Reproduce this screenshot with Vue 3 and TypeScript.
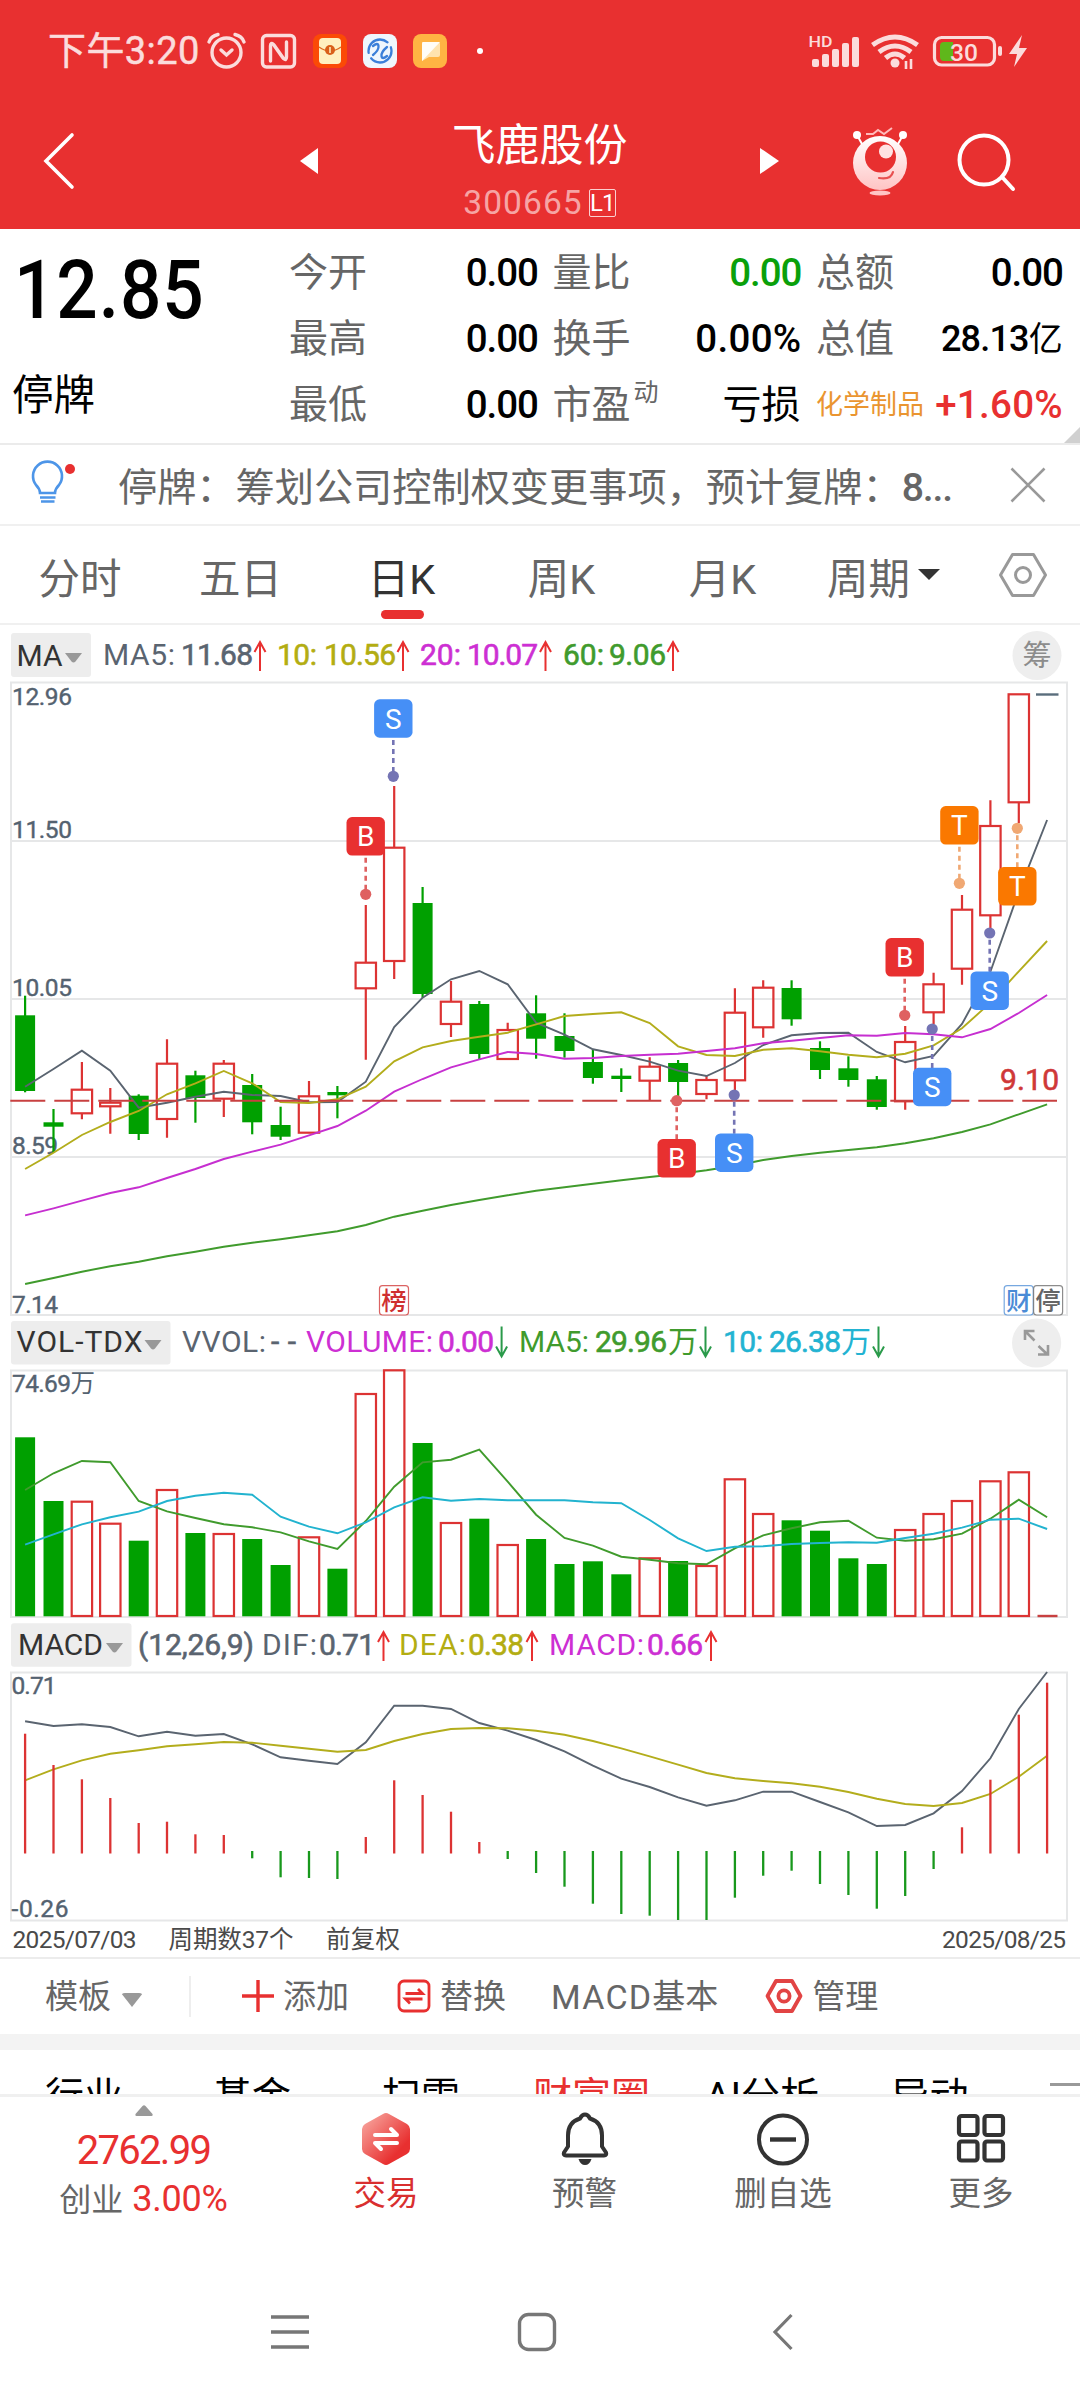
<script setup lang="ts">
type Series = number[]

const STEP = 28.39
const cx = (i: number): number => +(25.1 + i * STEP).toFixed(1)
const line = (ys: Series): string => ys.map((y, i) => `${cx(i)},${y}`).join(' ')

/* direction, high, body top, body bottom, low */
const candles: [string, number, number, number, number][] = [
  ['d', 995.7, 1015.3, 1091, 1092.3], ['d', 1109, 1122.3, 1126.7, 1152.7], ['u', 1062, 1089.7, 1113.3, 1119.3],
  ['u', 1088, 1102.7, 1106.3, 1133.7], ['d', 1094.3, 1095.7, 1134, 1140], ['u', 1039.3, 1063.7, 1119, 1137.7],
  ['d', 1070.7, 1075.3, 1098, 1122.7], ['u', 1060, 1063.7, 1098.7, 1117], ['d', 1074, 1085, 1122.3, 1134.3],
  ['d', 1106.7, 1125, 1136.7, 1140], ['u', 1081, 1096.3, 1132.7, 1133], ['d', 1086, 1092, 1095.3, 1118.3],
  ['u', 905, 962.7, 988.3, 1059.7], ['u', 786, 847.7, 961, 979], ['d', 887, 903, 994, 997.7],
  ['u', 981, 1001.7, 1024, 1037], ['d', 1001, 1004, 1054, 1059.3], ['u', 1022.7, 1030, 1059, 1059.3],
  ['d', 995.3, 1013.3, 1038.7, 1058.7], ['d', 1013.3, 1036, 1051, 1057.7], ['d', 1049.3, 1062, 1078, 1083.7],
  ['d', 1068.3, 1075.7, 1079, 1092], ['u', 1057.3, 1066.7, 1080.7, 1100.3], ['d', 1060, 1063, 1082, 1096],
  ['u', 1076, 1080, 1094, 1099.3], ['u', 988.3, 1012.7, 1080.3, 1090], ['u', 980.3, 987.7, 1027.3, 1037.7],
  ['d', 980.3, 988, 1019.3, 1025.7], ['d', 1041.3, 1048, 1070, 1079], ['d', 1056.3, 1068.3, 1080, 1086.7],
  ['d', 1076, 1079.3, 1107, 1109.7], ['u', 1026, 1042, 1101.3, 1109.7], ['u', 972.7, 984.3, 1012.3, 1024],
  ['u', 895, 909.7, 968.7, 984.7], ['u', 800.3, 826, 915.3, 928.3], ['u', 694.3, 694.3, 802.3, 823.3]
]

const ma5: Series = [1086.7, 1069, 1050.7, 1070.7, 1107.7, 1102.7, 1096.7, 1091.7, 1095, 1096, 1102.3, 1102, 1081.7, 1027, 997.7, 979.3, 971, 984.3, 1022.7, 1034.7, 1049.3, 1055, 1061.7, 1070.7, 1076, 1063, 1045, 1035.3, 1033, 1032.7, 1052, 1062.3, 1056, 1024, 971.7, 891.7, 820]
const ma10: Series = [1169, 1152.7, 1135, 1122, 1111, 1094.3, 1083.3, 1071, 1083.3, 1102, 1103, 1099.3, 1086.7, 1061.3, 1047.3, 1041, 1036.7, 1032.7, 1024.3, 1016, 1014, 1012.3, 1023, 1046.3, 1055, 1056, 1049.7, 1048.3, 1051.3, 1054.7, 1057.3, 1053.7, 1045.3, 1028.3, 1002.7, 971.3, 941]
const ma20: Series = [1215.3, 1208.3, 1200.7, 1193, 1187.3, 1178, 1169, 1159, 1151.7, 1144.7, 1135.3, 1126, 1110.7, 1091.7, 1079, 1067.3, 1059.3, 1052, 1054, 1058.7, 1058, 1056, 1054.7, 1053.7, 1051, 1048.3, 1043.3, 1040.7, 1038, 1035.3, 1035.7, 1033, 1034.3, 1037.3, 1029, 1013, 995]
const ma60: Series = [1284, 1278, 1271.7, 1266.3, 1261.7, 1256.3, 1251.7, 1246.7, 1242.7, 1239.3, 1235.3, 1231.3, 1225, 1216.7, 1210.7, 1205, 1200, 1195.3, 1190.7, 1187.3, 1183.7, 1180.3, 1177, 1174, 1170.3, 1165.7, 1160, 1156, 1152.7, 1150, 1147.3, 1143.3, 1138.3, 1132, 1124.3, 1114.3, 1104.3]

const volTop: Series = [1437.3, 1501, 1501.7, 1523.7, 1540.7, 1490, 1533, 1534, 1539, 1565, 1537.3, 1568.7, 1394, 1370.3, 1443, 1523, 1518.7, 1545, 1539, 1564, 1561.3, 1574.3, 1558.3, 1561, 1566, 1479.3, 1514, 1520.3, 1530.7, 1558.3, 1564, 1530, 1514, 1501, 1481.3, 1472.3]
const volMa5: Series = [1490, 1473.3, 1461, 1462.3, 1501, 1511.3, 1518, 1524.3, 1527.3, 1532.3, 1541.3, 1549, 1521, 1486.7, 1462.3, 1459.7, 1449.7, 1481.7, 1514.7, 1538, 1545.7, 1556.7, 1559.7, 1563.3, 1564.3, 1548.3, 1535.3, 1528.3, 1522.3, 1520.7, 1537.7, 1540.7, 1539.3, 1533.7, 1518.7, 1499.7, 1517.3]
const volMa10: Series = [1544.7, 1534.3, 1524.3, 1517.3, 1511.7, 1501, 1495.7, 1492.7, 1494.7, 1516.7, 1526.7, 1533.3, 1522.3, 1507.3, 1497.3, 1500.7, 1499, 1500.3, 1500.3, 1500.3, 1502.3, 1503.3, 1520, 1538.3, 1551, 1546.7, 1546.3, 1544, 1543, 1542.3, 1542.7, 1538, 1533.7, 1527.7, 1519.7, 1518.7, 1529]

const hist: Series = [1733.7, 1765, 1779.3, 1798, 1823, 1821.7, 1834.3, 1835, 1858.3, 1877.3, 1878, 1879, 1837, 1780.3, 1795, 1811.7, 1842, 1859, 1873, 1886.7, 1903.7, 1914, 1915.7, 1920, 1920, 1897.7, 1875.7, 1870.7, 1884, 1895, 1908.7, 1896, 1869, 1827.3, 1779.7, 1714.7, 1682.7]
const dif: Series = [1721.3, 1726, 1724.3, 1727, 1736.3, 1731.7, 1735.7, 1734, 1744.3, 1757.3, 1760.7, 1764, 1742.3, 1705.7, 1705.7, 1709, 1723, 1730.7, 1740, 1751.3, 1765.7, 1778.7, 1787, 1797.3, 1805.7, 1800.3, 1791.7, 1791.7, 1802, 1812.3, 1826, 1825, 1813.3, 1791, 1758.3, 1709, 1672]
const dea: Series = [1780.3, 1769.3, 1760.3, 1753.7, 1750.3, 1746.3, 1744.3, 1742, 1742.7, 1745.7, 1748.7, 1751.7, 1750, 1741, 1734, 1729, 1728, 1728.3, 1730.7, 1734.7, 1741, 1748.3, 1756.3, 1764.7, 1773, 1778.3, 1781, 1783.3, 1786.7, 1792, 1798.7, 1804, 1806, 1803, 1794, 1776.7, 1755.7]

interface Badge { t: string; x: number; y: number; dot: number }
const badges: Badge[] = [
  { t: 'S', x: 393.3, y: 718.5, dot: 776.3 },
  { t: 'B', x: 365.7, y: 836.3, dot: 894.3 },
  { t: 'T', x: 959.4, y: 825.3, dot: 883.3 },
  { t: 'T', x: 1017.3, y: 886.3, dot: 828.3 },
  { t: 'B', x: 904.7, y: 957.3, dot: 1015.3 },
  { t: 'S', x: 989.7, y: 990.7, dot: 933 },
  { t: 'S', x: 932.2, y: 1087, dot: 1029 },
  { t: 'B', x: 676.7, y: 1158.3, dot: 1100.7 },
  { t: 'S', x: 734.2, y: 1152.7, dot: 1095 }
]
const fill: Record<string, string> = { S: '#468ff6', B: '#e83030', T: '#fa7800' }
const soft: Record<string, string> = { S: '#7474b4', B: '#df6161', T: '#f0a873' }

interface Legend { t: string; x: number; w: number; c: string; m?: boolean }
const GREY = '#5a6470'
const maLegend: Legend[] = [
  { t: 'MA5:', x: 103, w: 72, c: GREY }, { t: '11.68', x: 181, w: 72, c: GREY, m: true },
  { t: '10:', x: 277, w: 40, c: '#b3ad12', m: true }, { t: '10.56', x: 324, w: 72, c: '#b3ad12', m: true },
  { t: '20:', x: 420, w: 41, c: '#cd2fd3', m: true }, { t: '10.07', x: 467, w: 71, c: '#cd2fd3', m: true },
  { t: '60:', x: 563, w: 41, c: '#409b2d', m: true }, { t: '9.06', x: 609, w: 57, c: '#409b2d', m: true }
]
const volLegend: Legend[] = [
  { t: 'VVOL:', x: 182, w: 84, c: GREY }, { t: '--', x: 271, w: 25, c: GREY, m: true },
  { t: 'VOLUME:', x: 306, w: 127, c: '#cd2fd3' }, { t: '0.00', x: 438, w: 56, c: '#cd2fd3', m: true },
  { t: 'MA5:', x: 519, w: 70, c: '#409b2d' }, { t: '29.96', x: 595, w: 72, c: '#409b2d', m: true }, { t: '万', x: 668, w: 29, c: '#409b2d' },
  { t: '10:', x: 723, w: 40, c: '#22b3d2', m: true }, { t: '26.38', x: 769, w: 72, c: '#22b3d2', m: true }, { t: '万', x: 841, w: 29, c: '#22b3d2' }
]
const macdLegend: Legend[] = [
  { t: '(12,26,9)', x: 138, w: 116, c: GREY, m: true },
  { t: 'DIF:', x: 262, w: 55, c: GREY }, { t: '0.71', x: 319, w: 56, c: GREY, m: true },
  { t: 'DEA:', x: 399, w: 67, c: '#b3ad12' }, { t: '0.38', x: 468, w: 56, c: '#b3ad12', m: true },
  { t: 'MACD:', x: 549, w: 95, c: '#cd2fd3' }, { t: '0.66', x: 647, w: 56, c: '#cd2fd3', m: true }
]
const priceAxis = [
  { t: '12.96', y: 704.7, w: 60 }, { t: '11.50', y: 837.7, w: 60 }, { t: '10.05', y: 995.7, w: 60 },
  { t: '8.59', y: 1153.7, w: 46 }, { t: '7.14', y: 1312.7, w: 46 }
]
const tags = [
  { t: '榜', x: 379.5, c: '#cf2f2f' }, { t: '财', x: 1004.2, c: '#4a8bd6' }, { t: '停', x: 1033.6, c: '#666' }
]
const up = (x: number, y: number): string => `M${x} ${y + 30}V${y + 1}M${x - 5.5} ${y + 11}L${x} ${y + 1}L${x + 5.5} ${y + 11}`
const down = (x: number, y: number): string => `M${x} ${y}V${y + 30}M${x - 5.5} ${y + 20}L${x} ${y + 30}L${x + 5.5} ${y + 20}`

const tabs = [
  { t: '分时', w: 160 }, { t: '五日', w: 161 }, { t: '日K', w: 161, on: true }, { t: '周K', w: 159 }, { t: '月K', w: 163 }
]
const infoTabs = [
  { t: '行业', w: 168 }, { t: '基金', w: 168 }, { t: '扫雷', w: 170 }, { t: '财富圈', w: 171, on: true }, { t: 'AI分析', w: 170 }, { t: '异动', w: 165 }
]
</script>

<template>
  <div class="app">
    <header class="top">
      <div class="status">
        <span class="clock">下午3:20</span>
        <svg class="st-left" width="290" height="50" viewBox="200 26 290 50">
          <g fill="none" stroke="#fbdcdc" stroke-width="3.4" stroke-linecap="round">
            <circle cx="226.5" cy="52.5" r="14.5" />
            <path d="M209 42Q211 36 218 34.500M244 42Q242 36 235 34.500" />
            <path d="M221 50l5.500 5 5.500-5" />
            <rect x="262.500" y="35.500" width="32" height="31.500" rx="4" />
            <path d="M270.500 61V46q0-4 3-1.500l9.500 13.500M286.500 42V57q0 4-3 1.500L274 45" />
          </g>
          <rect x="313" y="34" width="34" height="34" rx="8" fill="#fb4a06" />
          <rect x="319" y="38" width="22" height="26" rx="4" fill="#fff0c0" />
          <path d="M319 47q11 8 22 0" fill="none" stroke="#dd6a20" stroke-width="1.500" />
          <circle cx="330" cy="50" r="5" fill="#d9601a" /><path d="M330 47v6" stroke="#fff0c0" stroke-width="1.500" />
          <rect x="363" y="34" width="34" height="34" rx="8" fill="#eff6fd" />
          <g fill="none" stroke="#3b7fd9" stroke-width="2.300" stroke-linecap="round">
            <circle cx="380" cy="51" r="11.500" stroke-dasharray="28 6" />
            <path d="M373 46q5-4 5.500 0t-5.500 9M387 56q-5 4-5.500 0t5.500-9" />
          </g>
          <rect x="413" y="34" width="34" height="34" rx="8" fill="#ffb443" />
          <path d="M423 42h15q2 0 2 2v11q0 2-2 2h-9l-7 4v-17q0-2 1-2z" fill="#ffe3ae" />
          <path d="M423 42h17l-18 19v-17q0-2 1-2z" fill="#fffdf7" />
          <circle cx="480" cy="51" r="3" fill="#fff" />
        </svg>
        <svg class="st-right" width="230" height="50" viewBox="800 26 230 50">
          <text x="808.500" y="47" class="hd" textLength="24" lengthAdjust="spacingAndGlyphs">HD</text>
          <g fill="#fbdcdc">
            <rect x="812" y="59" width="7" height="8" rx="2" /><rect x="822" y="54" width="7" height="13" rx="2" />
            <rect x="832" y="49" width="7" height="18" rx="2" /><rect x="842" y="43" width="7" height="24" rx="2" />
            <rect x="852" y="37" width="7" height="30" rx="2" />
            <circle cx="895" cy="63" r="4.500" /><path d="M1022 35l-13 19h8l-3 13 13-19h-8z" />
            <rect x="998" y="46" width="4" height="10" rx="2" />
          </g>
          <g fill="none" stroke="#fbdcdc" stroke-width="5">
            <path d="M872.500 45q22.500-16 45 0M879 52q16-12 32 0M885.500 58q9.500-8 19 0" />
            <path d="M906 61v8M911 59v10" stroke-width="2.600" />
            <rect x="934.500" y="37.500" width="60" height="27.500" rx="7" stroke-width="3.200" />
          </g>
          <path d="M944 42h9v19h-9q-4 0-4-4V46q0-4 4-4z" fill="#5fb71b" />
          <text x="950" y="60.500" class="bat" textLength="28" lengthAdjust="spacingAndGlyphs">30</text>
        </svg>
      </div>
      <div class="bar">
        <svg class="back" width="34" height="60" viewBox="0 0 34 60"><path d="M30 4L4 30L30 56" fill="none" stroke="#fff" stroke-width="3.600" stroke-linecap="round" /></svg>
        <svg class="prev" width="20" height="26" viewBox="0 0 20 26"><path d="M19 0v26L1 13z" fill="#fff" /></svg>
        <div class="title">
          <h1>飞鹿股份</h1>
          <p>300665<i>L1</i></p>
        </div>
        <svg class="next" width="20" height="26" viewBox="0 0 20 26"><path d="M0 0v26l19-13z" fill="#fff" /></svg>
        <svg class="robot" width="58" height="70" viewBox="0 0 58 70">
          <defs><linearGradient id="rb" x1="0" y1="0" x2="0" y2="1"><stop offset="0" stop-color="#fff" /><stop offset="1" stop-color="#ffc4c4" /></linearGradient></defs>
          <circle cx="29" cy="36" r="27" fill="url(#rb)" />
          <path d="M11 17L6 8M47 17l5-9" stroke="#fff" stroke-width="2" />
          <circle cx="6" cy="8" r="4" fill="#fff" /><circle cx="52" cy="8" r="4" fill="#fff" />
          <path d="M15 7h7l5-4 6 4 8-6" fill="none" stroke="#fbb" stroke-width="2" />
          <circle cx="29.500" cy="30" r="15.500" fill="#e83030" /><circle cx="35" cy="24.500" r="7" fill="#ffe3e3" />
          <path d="M28 51q12 2 14-6" fill="none" stroke="#e85050" stroke-width="2.200" stroke-linecap="round" />
          <ellipse cx="29" cy="66" rx="10.500" ry="2.600" fill="#ffc4c4" />
        </svg>
        <svg class="search" width="60" height="60" viewBox="0 0 60 60"><g fill="none" stroke="#fff" stroke-width="4" stroke-linecap="round"><circle cx="27" cy="27" r="24.500" /><path d="M45 44l11 12" /></g></svg>
      </div>
    </header>

    <section class="quote">
      <div class="last"><b>12.85</b><span>停牌</span></div>
      <dl>
        <div><dt>今开</dt><dd>0.00</dd></div>
        <div><dt>量比</dt><dd class="green">0.00</dd></div>
        <div><dt>总额</dt><dd>0.00</dd></div>
        <div><dt>最高</dt><dd>0.00</dd></div>
        <div><dt>换手</dt><dd class="wide">0.00%</dd></div>
        <div><dt>总值</dt><dd class="tight">28.13<small>亿</small></dd></div>
        <div><dt>最低</dt><dd>0.00</dd></div>
        <div><dt>市盈<sup>动</sup></dt><dd class="cn">亏损</dd></div>
        <div><dt class="sector">化学制品</dt><dd class="red wide">+1.60%</dd></div>
      </dl>
      <i class="corner"></i>
    </section>

    <section class="notice">
      <svg class="bulb" width="48" height="46" viewBox="30 460 48 46">
        <g fill="none" stroke="#4d95e8" stroke-width="2.600"><path d="M40 493q0-4-4-8a14.500 14.500 0 1 1 23 0q-4 4-4 8z" /><path d="M40 497.500h15.500M41 501.500h13.500" /></g>
        <circle cx="70" cy="469" r="5" fill="#e83030" />
      </svg>
      <p>停牌：筹划公司控制权变更事项，预计复牌：<span>8...</span></p>
      <svg class="x" width="36" height="36" viewBox="0 0 36 36"><path d="M1.500 1.500l33 33M34.500 1.500l-33 33" stroke="#999" stroke-width="2.600" /></svg>
    </section>

    <nav class="tabs">
      <span v-for="t in tabs" :key="t.t" :class="{ on: t.on }" :style="{ width: t.w + 'px' }">{{ t.t }}</span>
      <span class="period">周期<i></i></span>
      <svg class="hex" width="50" height="48" viewBox="0 0 50 48"><g fill="none" stroke="#999" stroke-width="3"><path d="M14.500 3.500h21L47.500 24 35.500 44.500h-21L2.500 24z" stroke-linejoin="round" /><circle cx="25" cy="24" r="7.500" /></g></svg>
    </nav>

    <svg class="panel" width="1080" height="693" viewBox="0 625 1080 693">
      <rect x="11" y="633" width="80" height="44" rx="3" fill="#ededed" />
      <text x="16.500" y="665.500" class="lg" fill="#333" textLength="46" lengthAdjust="spacingAndGlyphs">MA</text>
      <path d="M65 653h17l-6.500 8.500q-2 2-4 0z" fill="#999" />
      <text v-for="l in maLegend" :key="l.x" :x="l.x" y="665" class="lg" :class="{ m: l.m }" :fill="l.c" :stroke="l.m ? l.c : 'none'" :textLength="l.w">{{ l.t }}</text>
      <path v-for="x in [260, 403, 545.5, 673]" :key="x" :d="up(x, 641)" class="arrow up" />
      <circle cx="1037" cy="655.500" r="24.500" fill="#eee" />
      <text x="1037" y="666" text-anchor="middle" class="cjk" font-size="29" fill="#8c8c8c">筹</text>

      <g fill="none" stroke="#e6e7e8" stroke-width="2">
        <rect x="11" y="682.500" width="1056" height="632.500" /><path d="M11 841H1067M11 999H1067M11 1157H1067" />
      </g>
      <text v-for="a in priceAxis" :key="a.t" x="12" :y="a.y" class="ax" :textLength="a.w">{{ a.t }}</text>
      <g v-for="(k, i) in candles" :key="i">
        <g v-if="k[0] === 'd'" fill="#00a000"><rect :x="cx(i) - 1.1" :y="k[1]" width="2.200" :height="k[4] - k[1]" /><rect :x="cx(i) - 10" :y="k[2]" width="20" :height="k[3] - k[2]" /></g>
        <g v-else stroke="#dc3333" stroke-width="2.200" fill="none"><path :d="`M${cx(i)} ${k[1]}V${k[2]}M${cx(i)} ${k[3]}V${k[4]}`" /><rect :x="cx(i) - 10.2" :y="k[2]" width="20.400" :height="k[3] - k[2]" /></g>
      </g>
      <path d="M1036 694.500h22.500" stroke="#5a6d7c" stroke-width="2.400" />
      <g fill="none" stroke-width="1.900">
        <polyline :points="line(ma5)" stroke="#5a6470" /><polyline :points="line(ma10)" stroke="#b3ad1c" />
        <polyline :points="line(ma20)" stroke="#c62fd0" /><polyline :points="line(ma60)" stroke="#409b2d" />
      </g>
      <path d="M10.300 1100.700H1057" stroke="#c84040" stroke-width="2" stroke-dasharray="35 9" />
      <text x="1000" y="1090" class="lg m" fill="#cf3838" stroke="#cf3838" textLength="59">9.10</text>
      <g v-for="(b, i) in badges" :key="'b' + i">
        <line :x1="b.x" :x2="b.x" :y1="b.dot > b.y ? b.y + 21.5 : b.y - 19" :y2="b.dot" :stroke="soft[b.t]" stroke-width="2.600" stroke-dasharray="5 4" />
        <circle :cx="b.x" :cy="b.dot" r="5.600" :fill="soft[b.t]" />
        <rect :x="b.x - 19.2" :y="b.y - 19.2" width="38.400" height="38.400" rx="5.500" :fill="fill[b.t]" />
        <text :x="b.x" :y="b.y + 10" text-anchor="middle" class="bd">{{ b.t }}</text>
      </g>
      <g v-for="t in tags" :key="t.t">
        <rect :x="t.x" y="1285.700" width="29" height="29.300" rx="3" fill="#fff" :stroke="t.c" stroke-width="1.200" stroke-opacity=".75" />
        <text :x="t.x + 14.5" y="1309.500" text-anchor="middle" class="cjk" font-size="25.500" font-weight="500" :fill="t.c">{{ t.t }}</text>
      </g>
    </svg>

    <svg class="panel" width="1080" height="302" viewBox="0 1318 1080 302">
      <rect x="11" y="1321" width="159.500" height="43.500" rx="3" fill="#ededed" />
      <text x="16.500" y="1352" class="lg" fill="#333" textLength="126">VOL-TDX</text>
      <path d="M144.500 1340h17l-6.500 8.500q-2 2-4 0z" fill="#999" />
      <text v-for="l in volLegend" :key="l.x" :x="l.x" y="1352" :class="[l.t === '万' ? 'wan' : 'lg', { m: l.m }]" :fill="l.c" :stroke="l.m ? l.c : 'none'" :textLength="l.w">{{ l.t }}</text>
      <path v-for="x in [501.6, 705.5, 878.5]" :key="x" :d="down(x, 1326.5)" class="arrow down" />
      <circle cx="1036.600" cy="1343" r="24.600" fill="#eee" />
      <path d="M1034.500 1340.500l-9-9M1025 1340v-9h9.500M1038.500 1346l9 8.500M1048 1345v9.500h-10" fill="none" stroke="#999" stroke-width="2.600" />
      <rect x="11" y="1370.500" width="1056" height="246.500" fill="none" stroke="#e6e7e8" stroke-width="2" />
      <text x="12" y="1391.700" class="ax" textLength="59">74.69</text>
      <text x="70.500" y="1391.700" class="cjk" font-size="24.500" fill="#546270">万</text>
      <template v-for="(y, i) in volTop" :key="i">
        <rect v-if="candles[i][0] === 'd'" :x="cx(i) - 10" :y="y" width="20" :height="1616.3 - y" fill="#00a000" />
        <rect v-else :x="cx(i) - 10.2" :y="y" width="20.400" :height="1616 - y" fill="none" stroke="#dc3333" stroke-width="2.200" />
      </template>
      <path d="M1037.500 1616h20" stroke="#c84040" stroke-width="2.400" />
      <g fill="none" stroke-width="1.900"><polyline :points="line(volMa5)" stroke="#409b2d" /><polyline :points="line(volMa10)" stroke="#22b3cf" /></g>
    </svg>

    <svg class="panel" width="1080" height="337" viewBox="0 1620 1080 337">
      <rect x="11" y="1623.300" width="120.500" height="43.500" rx="3" fill="#ededed" />
      <text x="18" y="1655" class="lg" fill="#333" textLength="85">MACD</text>
      <path d="M106 1643h17l-6.500 8.500q-2 2-4 0z" fill="#999" />
      <text v-for="l in macdLegend" :key="l.x" :x="l.x" y="1655" class="lg" :class="{ m: l.m }" :fill="l.c" :stroke="l.m ? l.c : 'none'" :textLength="l.w">{{ l.t }}</text>
      <path v-for="x in [383.5, 532, 711]" :key="x" :d="up(x, 1631)" class="arrow up" />
      <rect x="11" y="1672.500" width="1056" height="248" fill="none" stroke="#e6e7e8" stroke-width="2" />
      <text x="11.500" y="1694.300" class="ax" textLength="45">0.71</text>
      <text x="11.500" y="1917.300" class="ax" textLength="57">-0.26</text>
      <g fill="none" stroke-width="1.900"><polyline :points="line(dif)" stroke="#5a6470" /><polyline :points="line(dea)" stroke="#b3ad1c" /></g>
      <path v-for="(y, i) in hist" :key="i" :d="y < 1852 ? `M${cx(i)} 1853.500V${y}` : `M${cx(i)} 1851V${y}`" :stroke="y < 1852 ? '#dc3333' : '#18981c'" stroke-width="2.300" />
      <g class="date" fill="#4a4a4a">
        <text x="12.500" y="1947.700" textLength="124">2025/07/03</text>
        <text x="168.500" y="1948" textLength="125">周期数37个</text>
        <text x="326" y="1948" textLength="74">前复权</text>
        <text x="942" y="1947.700" textLength="124">2025/08/25</text>
      </g>
    </svg>

    <div class="tools">
      <span class="tpl">模板<i></i></span>
      <span class="add"><svg width="32" height="32" viewBox="0 0 32 32"><path d="M16 0v32M0 16h32" stroke="#e83030" stroke-width="3.400" /></svg>添加</span>
      <span class="rep"><svg width="34" height="34" viewBox="0 0 34 34"><g fill="none" stroke="#e83030" stroke-width="2.800"><rect x="2" y="2" width="30" height="30" rx="5" /><path d="M8.500 14.500h17l-4.500-4.500M25.500 20H8.500l4.500 4.500" /></g></svg>替换</span>
      <span class="base"><em>MACD</em>基本</span>
      <span class="mgr"><svg width="38" height="36" viewBox="0 0 38 36"><g fill="none" stroke="#e24444" stroke-width="3.800"><path d="M11 3h16l8.500 15L27 33H11L2.500 18z" stroke-linejoin="round" /><circle cx="19" cy="18" r="5.600" /></g></svg>管理</span>
    </div>

    <div class="info">
      <span v-for="t in infoTabs" :key="t.t" :class="{ on: t.on }" :style="{ width: t.w + 'px' }">{{ t.t }}</span>
      <i></i>
    </div>

    <footer class="dock">
      <div class="index">
        <svg width="18" height="11" viewBox="0 0 18 11"><path d="M7.500 1q1.500-1.500 3 0L17.500 9q.5 2-1 2h-15q-1.500 0-1-2z" fill="#999" /></svg>
        <b>2762.99</b>
        <p>创业<em>3.00%</em></p>
      </div>
      <div class="act hot" style="width: 198px">
        <svg width="54" height="54" viewBox="0 0 54 54">
          <defs><linearGradient id="hx" x1="0" y1="0" x2="1" y2="1"><stop offset="0" stop-color="#f9b0a8" /><stop offset=".75" stop-color="#e83030" /></linearGradient></defs>
          <path d="M27 1q1.500 0 3 1l18 10q3 2 3 5v20q0 3-3 5L30 52q-3 2-6 0L6 42q-3-2-3-5V17q0-3 3-5L24 2q1.500-1 3-1z" fill="url(#hx)" />
          <path d="M16 23h22l-6-6M38 31H16l6 6" fill="none" stroke="#fff" stroke-width="4" stroke-linejoin="round" stroke-linecap="round" />
        </svg><span>交易</span>
      </div>
      <div class="act" style="width: 199px">
        <svg width="54" height="54" viewBox="0 0 54 54"><path d="M27 2.500c2.500 0 4 2 5 4 8 2.500 12 9 12 17v11l4 6q1 3-2 3H8q-3 0-2-3l4-6v-11c0-8 4-14.500 12-17 1-2 2.500-4 5-4z" fill="none" stroke="#333" stroke-width="4" stroke-linejoin="round" /><path d="M20.500 47h13q-2 6-6.500 6t-6.500-6z" fill="#333" /></svg><span>预警</span>
      </div>
      <div class="act" style="width: 198px">
        <svg width="54" height="54" viewBox="0 0 54 54"><g fill="none" stroke="#333" stroke-width="4"><circle cx="27" cy="27.500" r="24" /><path d="M14 27.500h26" stroke-width="4.400" /></g></svg><span>删自选</span>
      </div>
      <div class="act" style="width: 198px">
        <svg width="54" height="54" viewBox="0 0 54 54"><g fill="none" stroke="#333" stroke-width="4.200"><rect x="5" y="4" width="18.500" height="19" rx="2.500" /><rect x="30.500" y="4" width="18.500" height="19" rx="2.500" /><rect x="5" y="29.500" width="18.500" height="19" rx="2.500" /><rect x="30.500" y="29.500" width="18.500" height="19" rx="2.500" /></g></svg><span>更多</span>
      </div>
    </footer>

    <div class="sysnav">
      <svg width="38" height="36" viewBox="0 0 38 36"><path d="M0 3h38M0 18h38M0 33h38" stroke="#777" stroke-width="3.400" /></svg>
      <svg width="40" height="40" viewBox="0 0 40 40"><rect x="2.500" y="2.500" width="35" height="35" rx="9" fill="none" stroke="#777" stroke-width="3.400" /></svg>
      <svg width="22" height="38" viewBox="0 0 22 38"><path d="M19.500 2L3 19l16.500 17" fill="none" stroke="#777" stroke-width="3.200" /></svg>
    </div>
  </div>
</template>

<style>
body { background: #fff; }
</style>

<style scoped>
.app { width: 1080px; height: 2400px; display: flex; flex-direction: column; overflow: hidden; background: #fff; color: #000; font-family: Roboto, "Noto Sans CJK SC", sans-serif; }
.app * { box-sizing: border-box; }
svg { flex: none; display: block; }
i, em { font-style: normal; }
h1, p, dl, dt, dd { margin: 0; font-weight: 400; }

.top { height: 229px; flex: none; background: #e83030; color: #fff; display: flex; flex-direction: column; }
.status { height: 100px; padding-left: 48px; display: flex; align-items: flex-start; color: #fbdcdc; }
.clock { width: 152px; font-size: 38px; line-height: 50px; margin-top: 26px; letter-spacing: .4px; white-space: nowrap; -webkit-text-stroke: .5px #fbdcdc; }
.st-left, .st-right { margin-top: 26px; }
.st-right { margin-left: 310px; }
.hd { font: 500 15px Roboto, sans-serif; fill: #fbdcdc; }
.bat { font: 500 24px Roboto, sans-serif; fill: #fbdcdc; }
.bar { height: 129px; display: flex; align-items: flex-start; }
.back { margin: 31px 0 0 42px; }
.prev { margin: 48px 0 0 223px; }
.title { width: 441px; text-align: center; margin-top: 17px; }
.title h1 { font-size: 44px; line-height: 58px; }
.title p { display: flex; justify-content: center; align-items: center; font-size: 33.500px; line-height: 36px; margin-top: 10px; letter-spacing: 1.100px; color: #f6a4a4; }
.title p i { width: 27px; height: 28px; margin-left: 6px; border: 1.500px solid #fbd0d0; border-radius: 2px; font-size: 24px; line-height: 26px; letter-spacing: -1px; color: #fff; }
.next { margin: 48px 0 0 0; }
.robot { margin: 27px 0 0 71px; }
.search { margin: 33px 0 0 48px; }

.quote { position: relative; height: 216px; flex: none; display: flex; border-bottom: 2px solid #ebebeb; }
.last { width: 289px; display: flex; flex-direction: column; }
.last b { font-weight: 500; font-size: 82px; line-height: 90px; margin: 16px 0 0 14px; letter-spacing: 1px; transform: scaleX(.89); transform-origin: 0 50%; }
.last span { font-size: 41.500px; line-height: 50px; margin: 36px 0 0 12px; }
dl { display: grid; grid-template-columns: 248px 248px 246px; column-gap: 15.500px; grid-auto-rows: 66px; margin-top: 12px; }
dl div { display: flex; justify-content: space-between; line-height: 64px; }
dt { font-size: 39px; color: #666; white-space: nowrap; }
dd { font-size: 38.500px; font-weight: 500; letter-spacing: -1px; white-space: nowrap; margin-right: -1px; }
dd.wide { letter-spacing: .3px; }
dd.cn { font-weight: 400; font-size: 39px; letter-spacing: 0; margin-right: 0; }
dd.tight { font-size: 36px; letter-spacing: -.8px; margin-right: 0; }
dd small { font-size: 34px; font-weight: 400; }
sup { font-size: 25px; line-height: 20px; vertical-align: 17px; margin-left: 3px; }
.green { color: #0aa00a; }
.red { color: #e83030; }
dt.sector { font-size: 27px; color: #ea9530; }
.corner { position: absolute; right: 0; bottom: 0; border: 8px solid #d0d0d0; border-top-color: transparent; border-left-color: transparent; }

.notice { height: 81px; flex: none; display: flex; align-items: flex-start; border-bottom: 2px solid #f0f0f0; }
.bulb { margin: 15px 0 0 30px; }
.notice p { width: 893px; padding-left: 40px; font-size: 39.200px; line-height: 87px; color: #666; white-space: nowrap; }
.notice p span { font-weight: 500; letter-spacing: -1.200px; }
.x { margin: 22px 0 0 39px; }

.tabs { height: 99px; flex: none; display: flex; border-bottom: 2px solid #f0f0f0; font-size: 41.500px; color: #666; }
.tabs span { position: relative; text-align: center; line-height: 108px; }
.tabs .on { color: #333; }
.tabs .on::after { content: ""; position: absolute; left: 60px; top: 84px; width: 43px; height: 9px; border-radius: 5px; background: #e83030; }
.tabs .period { display: flex; margin-left: 23px; width: 115px; }
.period i { align-self: flex-start; margin: 43px 0 0 8px; border: 11.500px solid transparent; border-top: 11px solid #333; border-bottom: 0; }
.hex { margin: 25px 0 0 56px; }

.lg { font: 400 30px Roboto, sans-serif; }
.lg.m { stroke-width: .6px; }
.wan { font: 400 30px "Noto Sans CJK SC", sans-serif; }
.ax { font: 400 24.500px Roboto, sans-serif; fill: #546270; stroke: #546270; stroke-width: .4px; }
.cjk { font-family: "Noto Sans CJK SC", sans-serif; }
.bd { font: 400 28px Roboto, sans-serif; fill: #fff; }
.date { font: 400 24.500px Roboto, "Noto Sans CJK SC", sans-serif; }
.arrow { fill: none; stroke-width: 2; }
.arrow.up { stroke: #e83030; }
.arrow.down { stroke: #2a9a4a; }

.tools { height: 93px; flex: none; display: flex; align-items: center; border-top: 2px solid #ececec; border-bottom: 16px solid #f3f3f3; font-size: 33px; color: #666; }
.tools span { display: flex; align-items: center; line-height: 50px; white-space: nowrap; }
.tools svg { position: relative; top: -1px; }
.tpl { width: 146px; height: 41px; margin-left: 45px; border-right: 2px solid #eee; }
.tpl i { margin: 7px 0 0 10px; border: 11.500px solid transparent; border-top: 14px solid #999; border-bottom: 0; border-radius: 4px; }
.add { gap: 9px; margin-left: 51px; }
.rep { gap: 9px; margin-left: 48px; }
.base { margin-left: 45px; }
.base em { font-size: 34px; letter-spacing: 1.200px; }
.mgr { gap: 9px; margin-left: 47px; }

.info { height: 47px; flex: none; display: flex; overflow: hidden; position: relative; font-size: 39px; line-height: 55px; padding-top: 20px; border-bottom: 3px solid #f0f0f0; }
.info span { flex: none; text-align: center; }
.info .on { color: #e83030; }
.info i { position: absolute; right: 0; top: 33px; width: 30px; height: 3px; background: #999; }

.dock { height: 160px; flex: none; display: flex; }
.index { width: 287px; display: flex; flex-direction: column; align-items: center; color: #e83030; }
.index svg { margin-top: 8px; }
.index b { font-weight: 400; font-size: 40px; line-height: 44px; letter-spacing: -1.700px; margin-top: 13px; }
.index p { font-size: 32px; line-height: 44px; color: #666; margin-top: 4px; }
.index em { color: #e83030; font-size: 36px; letter-spacing: -.2px; margin-left: 9px; }
.act { display: flex; flex-direction: column; align-items: center; font-size: 32.500px; color: #666; }
.act svg { margin-top: 15px; }
.act span { line-height: 44px; margin-top: 6px; }
.act.hot { color: #d92f2f; }

.sysnav { height: 143px; flex: none; display: flex; align-items: flex-start; padding: 56px 0 0 271px; }
.sysnav svg:nth-child(1) { margin: 1px 208px 0 0; }
.sysnav svg:nth-child(2) { margin: -1px 215px 0 0; }
</style>
